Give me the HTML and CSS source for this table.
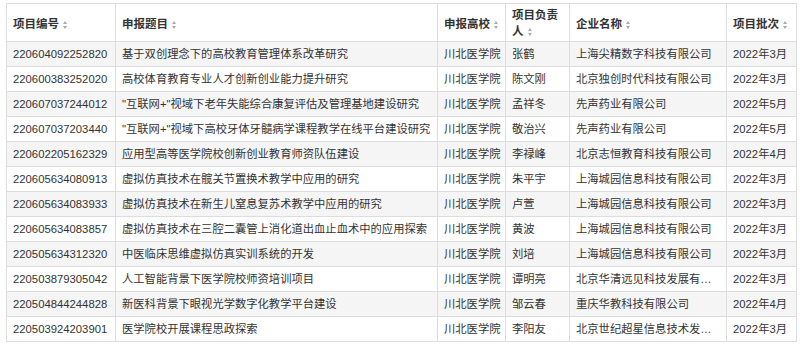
FILE: index.html
```html
<!DOCTYPE html>
<html lang="zh">
<head>
<meta charset="utf-8">
<link rel="stylesheet" href="styles.css">
</head>
<body>
<div class="wrap">
<table class="grid">
<colgroup>
<col class="c1"><col class="c2"><col class="c3"><col class="c4"><col class="c5"><col class="c6">
</colgroup>
<thead>
<tr>
<th>项目编号 <span class="sort"></span></th>
<th>申报题目 <span class="sort"></span></th>
<th>申报高校 <span class="sort"></span></th>
<th class="wrapcell">项目负责<br>人 <span class="sort"></span></th>
<th>企业名称 <span class="sort"></span></th>
<th>项目批次 <span class="sort"></span></th>
</tr>
</thead>
<tbody>
<tr><td>220604092252820</td><td>基于双创理念下的高校教育管理体系改革研究</td><td>川北医学院</td><td>张鹤</td><td class="ell">上海尖精数字科技有限公司</td><td>2022年3月</td></tr>
<tr><td>220600383252020</td><td>高校体育教育专业人才创新创业能力提升研究</td><td>川北医学院</td><td>陈文刚</td><td class="ell">北京独创时代科技有限公司</td><td>2022年3月</td></tr>
<tr><td>220607037244012</td><td>"互联网+"视域下老年失能综合康复评估及管理基地建设研究</td><td>川北医学院</td><td>孟祥冬</td><td class="ell">先声药业有限公司</td><td>2022年5月</td></tr>
<tr><td>220607037203440</td><td>"互联网+"视域下高校牙体牙髓病学课程教学在线平台建设研究</td><td>川北医学院</td><td>敬治兴</td><td class="ell">先声药业有限公司</td><td>2022年5月</td></tr>
<tr><td>220602205162329</td><td>应用型高等医学院校创新创业教育师资队伍建设</td><td>川北医学院</td><td>李禄峰</td><td class="ell">北京志恒教育科技有限公司</td><td>2022年4月</td></tr>
<tr><td>220605634080913</td><td>虚拟仿真技术在髋关节置换术教学中应用的研究</td><td>川北医学院</td><td>朱平宇</td><td class="ell">上海城园信息科技有限公司</td><td>2022年3月</td></tr>
<tr><td>220605634083933</td><td>虚拟仿真技术在新生儿窒息复苏术教学中应用的研究</td><td>川北医学院</td><td>卢萱</td><td class="ell">上海城园信息科技有限公司</td><td>2022年3月</td></tr>
<tr><td>220605634083857</td><td>虚拟仿真技术在三腔二囊管上消化道出血止血术中的应用探索</td><td>川北医学院</td><td>黄波</td><td class="ell">上海城园信息科技有限公司</td><td>2022年3月</td></tr>
<tr><td>220505634312320</td><td>中医临床思维虚拟仿真实训系统的开发</td><td>川北医学院</td><td>刘培</td><td class="ell">上海城园信息科技有限公司</td><td>2022年3月</td></tr>
<tr><td>220503879305042</td><td>人工智能背景下医学院校师资培训项目</td><td>川北医学院</td><td>谭明亮</td><td class="ell">北京华清远见科技发展有限公司</td><td>2022年3月</td></tr>
<tr><td>220504844244828</td><td>新医科背景下眼视光学数字化教学平台建设</td><td>川北医学院</td><td>邹云春</td><td class="ell">重庆华教科技有限公司</td><td>2022年4月</td></tr>
<tr><td>220503924203901</td><td>医学院校开展课程思政探索</td><td>川北医学院</td><td>李阳友</td><td class="ell">北京世纪超星信息技术发展有限责任公司</td><td>2022年3月</td></tr>
</tbody>
</table>
</div>
</body>
</html>
```

FILE: styles.css
```css
html, body {
  margin: 0;
  padding: 0;
  background: #fff;
}
body {
  font-family: "Liberation Sans", "Noto Sans CJK SC", sans-serif;
  font-size: 11.3px;
  color: #333;
}
.wrap {
  padding: 3px 4px 0 6px;
}
.grid {
  border-collapse: collapse;
  table-layout: fixed;
  width: 790px;
}
.c1 { width: 109px; }
.c2 { width: 322px; }
.c3 { width: 68px; }
.c4 { width: 64px; }
.c5 { width: 157px; }
.c6 { width: 70px; }
.grid th, .grid td {
  border: 1px solid #dddddd;
  padding: 0 6px;
  text-align: left;
  white-space: nowrap;
  overflow: hidden;
}
.grid th {
  height: 37px;
  font-weight: bold;
  font-size: 11.5px;
  color: #333;
  background: #fff;
  vertical-align: middle;
}
.grid th.wrapcell {
  line-height: 16px;
}
.grid td {
  height: 24px;
  line-height: 24px;
}
.grid td.ell {
  text-overflow: ellipsis;
}
.grid tbody tr:nth-child(odd) td {
  background: #f5f5f5;
}
.sort {
  display: inline-block;
  width: 5px;
  height: 8px;
  vertical-align: -1px;
  position: relative;
  margin-left: 1px;
}
.sort::before, .sort::after {
  content: "";
  position: absolute;
  left: 0;
  border-left: 2.5px solid transparent;
  border-right: 2.5px solid transparent;
}
.sort::before {
  top: 0;
  border-bottom: 3px solid #aaa;
}
.sort::after {
  bottom: 0;
  border-top: 3px solid #aaa;
}
```
